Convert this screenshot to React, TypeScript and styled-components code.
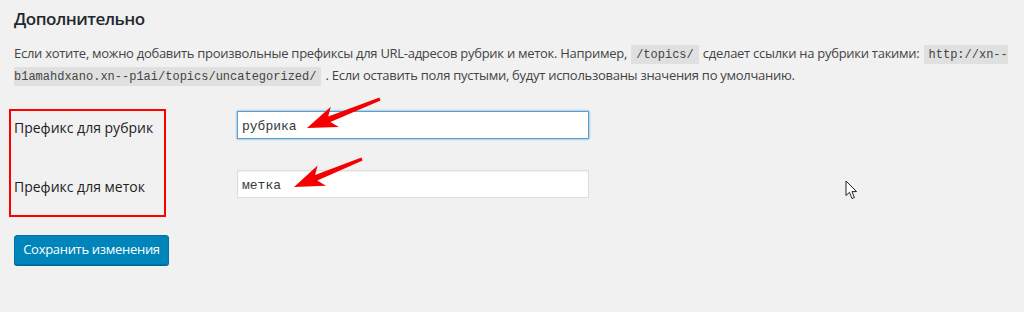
import React from 'react';
import styled, { createGlobalStyle } from 'styled-components';

const GlobalStyle = createGlobalStyle`
	html, body {
		margin: 0;
		padding: 0;
		background: #f1f1f1;
	}
	body {
		font-family: 'Open Sans', 'Noto Sans', sans-serif;
		color: #444;
	}
`;

type Pt = [number, number];

// polygon for a hand-drawn style annotation arrow
const arrowPoints = (tail: Pt, tip: Pt) => {
	const dx = tip[0] - tail[0];
	const dy = tip[1] - tail[1];
	const len = Math.hypot(dx, dy);
	const ux = dx / len;
	const uy = dy / len;
	const nx = -uy;
	const ny = ux;
	const headLen = 30;
	const headW = 11;
	const neck = 6;
	const bx = tip[0] - ux * headLen;
	const by = tip[1] - uy * headLen;
	const nbx = tip[0] - ux * (headLen - neck);
	const nby = tip[1] - uy * (headLen - neck);
	const pts: Pt[] = [
		[tail[0] + nx * 1.5, tail[1] + ny * 1.5],
		[nbx + nx * 3, nby + ny * 3],
		[bx + nx * headW, by + ny * headW],
		tip,
		[bx - nx * headW, by - ny * headW],
		[nbx - nx * 3, nby - ny * 3],
		[tail[0] - nx * 1.5, tail[1] - ny * 1.5],
	];
	return pts.map((p) => p.map((v) => v.toFixed(1)).join(',')).join(' ');
};

const App = () => {
	return (
		<>
			<GlobalStyle />
			<Page>
				<Title>Дополнительно</Title>
				<Description>
					Если хотите, можно добавить произвольные префиксы для URL-адресов рубрик и меток. Например,{' '}
					<Code>/topics/</Code> сделает ссылки на рубрики такими: <Code>http://xn--<br />b1amahdxano.xn--p1ai/topics/uncategorized/</Code>{' '}
					. Если оставить поля пустыми, будут использованы значения по умолчанию.
				</Description>
				<FormTable>
					<FieldRow>
						<Label htmlFor='category_base'>Префикс для рубрик</Label>
						<TextInput id='category_base' defaultValue='рубрика' focused />
					</FieldRow>
					<FieldRow>
						<Label htmlFor='tag_base'>Префикс для меток</Label>
						<TextInput id='tag_base' defaultValue='метка' />
					</FieldRow>
				</FormTable>
				<SubmitButton type='button'>Сохранить изменения</SubmitButton>

				<Highlight />
				<Annotations width='1024' height='312' viewBox='0 0 1024 312'>
					<polygon points={arrowPoints([380, 99], [307, 128])} fill='#f50000' />
					<polygon points={arrowPoints([362, 159], [294, 187])} fill='#f50000' />
				</Annotations>
				<Cursor width='14' height='20' viewBox='0 0 14 20'>
					<path
						d='M1 1 L1 15.5 L4.5 12.3 L7 18.5 L9.4 17.5 L7 11.6 L11.6 11.6 Z'
						fill='#fff'
						stroke='#222'
						strokeWidth='1'
						strokeLinejoin='round'
					/>
				</Cursor>
			</Page>
		</>
	);
};
export default App;

const Page = styled.div`
	position: relative;
	width: 1024px;
	height: 312px;
	padding: 0 14px;
	box-sizing: border-box;
	overflow: hidden;
`;

const Title = styled.h2`
	margin: 0;
	padding-top: 7px;
	font-size: 17px;
	line-height: 23px;
	font-weight: 600;
	letter-spacing: -0.5px;
	color: #23282d;
`;

const Description = styled.p`
	margin: 13px 0 0;
	font-size: 13px;
	line-height: 20px;
	letter-spacing: -0.28px;
	white-space: nowrap;
	color: #444;
`;

const Code = styled.code`
	font-family: 'Liberation Mono', 'DejaVu Sans Mono', monospace;
	font-size: 12px;
	letter-spacing: 0;
	padding: 3px 5px 2px;
	margin: 0 1px;
	background: rgba(0, 0, 0, 0.07);
	color: #444;
`;

const FormTable = styled.div`
	margin-top: 24px;
	display: flex;
	flex-direction: column;
	gap: 31px;
`;

const FieldRow = styled.div`
	display: flex;
	align-items: center;
`;

const Label = styled.label`
	width: 223px;
	flex-shrink: 0;
	padding-top: 4px;
	font-size: 14px;
	font-weight: 500;
	color: #1d2125;
	line-height: 19px;
`;

const TextInput = styled.input<{ focused?: boolean }>`
	width: 352px;
	height: 28px;
	box-sizing: border-box;
	padding: 3px 4px 0;
	border: 1px solid ${({ focused }) => (focused ? '#5b9dd9' : '#ddd')};
	box-shadow: ${({ focused }) =>
		focused ? '0 0 2px rgba(30, 140, 190, 0.8)' : 'inset 0 1px 2px rgba(0, 0, 0, 0.07)'};
	background: #fff;
	font-family: 'Liberation Mono', 'DejaVu Sans Mono', monospace;
	font-size: 13px;
	color: #32373c;
	outline: none;
`;

const SubmitButton = styled.button`
	margin-top: 37px;
	width: 155px;
	height: 30px;
	padding: 0 0 2px;
	border: 1px solid #0073aa;
	border-radius: 3px;
	background: #0085ba;
	box-shadow: 0 1px 0 #006799;
	color: #fff;
	font-family: 'Open Sans', 'Noto Sans', sans-serif;
	font-size: 13px;
	letter-spacing: -0.3px;
	white-space: nowrap;
	line-height: 26px;
	cursor: pointer;
`;

const Highlight = styled.div`
	position: absolute;
	left: 9px;
	top: 109px;
	width: 157px;
	height: 108px;
	box-sizing: border-box;
	border: 2px solid #f00;
	pointer-events: none;
`;

const Annotations = styled.svg`
	position: absolute;
	left: 0;
	top: 0;
	pointer-events: none;
`;

const Cursor = styled.svg`
	position: absolute;
	left: 845px;
	top: 180px;
`;
